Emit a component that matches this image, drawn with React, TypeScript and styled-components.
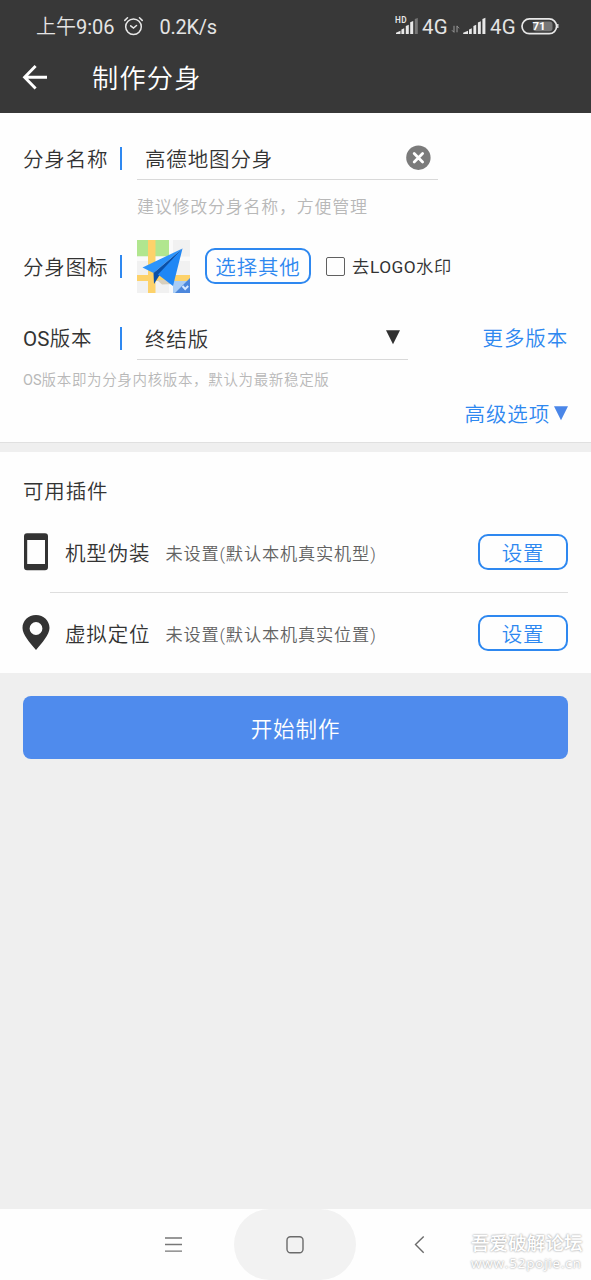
import React from "react";
import styled, { createGlobalStyle } from "styled-components";

const BLUE = "#2e88f0";
const INK = "#333333";

const GlobalStyle = createGlobalStyle`
  * { box-sizing: border-box; }
  body { margin: 0; background: #efefef; }
  button { font: inherit; letter-spacing: inherit; padding: 0; cursor: pointer; }
`;

const Screen = styled.div`
  width: 591px;
  height: 1280px;
  display: flex;
  flex-direction: column;
  overflow: hidden;
  background: #efefef;
  color: ${INK};
  font-family: Roboto, "Noto Sans CJK SC", sans-serif;
  font-weight: 350;
  white-space: nowrap;
`;

const Text = styled.span<{ $size?: number; $gap?: number; $color?: string; $drop?: number }>`
  font-size: ${(p) => p.$size ?? 20.5}px;
  letter-spacing: ${(p) => p.$gap ?? 0.85}px;
  color: ${(p) => p.$color ?? "inherit"};
  line-height: 1.3;
  padding-top: ${(p) => p.$drop ?? 4}px;
`;

const Latin = styled.span<{ $gap?: number }>`
  font-weight: 400;
  letter-spacing: ${(p) => p.$gap ?? 0}px;
`;

const Header = styled.header`
  height: 113px;
  background: #383838;
  color: #fff;
`;

const StatusBar = styled.div`
  height: 54px;
  padding: 0 32px 0 36px;
  display: flex;
  align-items: center;
  justify-content: space-between;
  color: #e4e4e4;
`;

const StatusGroup = styled.div<{ $gap: number }>`
  display: flex;
  align-items: center;
  gap: ${(p) => p.$gap}px;
  svg { display: block; flex: none; }
`;

const NetSpeed = styled(Text)`
  margin-left: 7px;
`;

const NetworkType = styled(Text)`
  width: 28px;
`;

const TitleBar = styled.div`
  height: 48px;
  padding-left: 22px;
  display: flex;
  align-items: center;
  gap: 44px;
`;

const Card = styled.section`
  background: #fefefe;
  padding: 0 23px;
`;

const FormCard = styled(Card)`
  height: 330px;
  border-bottom: 1px solid #e0e0e0;
`;

const PluginCard = styled(Card)`
  height: 221px;
  margin-top: 9px;
`;

const Row = styled.div<{ $height: number }>`
  height: ${(p) => p.$height}px;
  display: flex;
  align-items: center;
`;

const Label = styled(Text)`
  width: 97px;
`;

const Bar = styled.i`
  width: 2px;
  height: 23px;
  margin-right: 15px;
  background: ${BLUE};
`;

const Field = styled.div<{ $width: number; $pad: number }>`
  width: ${(p) => p.$width}px;
  height: 44px;
  padding: 0 ${(p) => p.$pad}px 0 8px;
  display: flex;
  align-items: center;
  justify-content: space-between;
  border-bottom: 1px solid #d9d9d9;
`;

const HintRow = styled(Row)`
  padding-left: 114px;
`;

const OutlineButton = styled.button<{ $width: number }>`
  width: ${(p) => p.$width}px;
  height: 36px;
  border: 2px solid ${BLUE};
  border-radius: 10px;
  background: transparent;
  color: ${BLUE};
  display: flex;
  align-items: center;
  justify-content: center;
`;

const PickButton = styled(OutlineButton)`
  margin: 0 15px 1px 15px;
`;

const Checkbox = styled.span`
  width: 19px;
  height: 19px;
  margin: 0 7px 1px 0;
  border: 1px solid #606060;
  border-radius: 2px;
`;

const MoreLink = styled(Text)`
  margin-left: auto;
`;

const AdvancedRow = styled(Row)`
  justify-content: flex-end;
  gap: 4px;
  svg { margin-bottom: 2px; }
`;

const CardTitle = styled(Row)`
  padding-top: 16px;
`;

const IconSlot = styled.div`
  width: 42px;
  display: flex;
`;

const PluginStatus = styled(Text)`
  margin-left: 15px;
  margin-right: auto;
`;

const Divider = styled.hr`
  height: 1px;
  margin: 0 0 0 27px;
  border: 0;
  background: #dedede;
`;

const StartButton = styled.button`
  height: 63px;
  margin: 23px 23px 0;
  border: 0;
  border-radius: 8px;
  background: #4f8bed;
  color: #fff;
  flex: none;
  display: flex;
  align-items: center;
  justify-content: center;
`;

const NavBar = styled.nav`
  height: 71px;
  margin-top: auto;
  padding-left: 165px;
  display: flex;
  align-items: center;
  background: #fefefe;
`;

const HomePill = styled.div`
  width: 122px;
  height: 71px;
  margin: 0 57px 0 51px;
  border-radius: 36px;
  background: #f2f2f2;
  display: flex;
  align-items: center;
  justify-content: center;
`;

const Watermark = styled.div`
  margin: 17px 0 0 45px;
  display: flex;
  flex-direction: column;
  color: #fff;
  font-weight: 500;
  text-shadow: 0 0 2px #aaa, 0 0 2px #bbb;
`;

const WatermarkLine = styled.span<{ $size: number; $gap: number }>`
  font-family: "Open Sans", "Noto Sans CJK SC", sans-serif;
  font-size: ${(p) => p.$size}px;
  letter-spacing: ${(p) => p.$gap}px;
  line-height: 20px;
`;

const AlarmIcon = () => (
  <svg width="20" height="20" viewBox="0 0 20 20" fill="none" stroke="#e8e8e8" strokeWidth="1.5" strokeLinecap="round">
    <circle cx="9.5" cy="9.8" r="7.8" />
    <path d="M.8 3.4 3.5 .8M18.2 3.4 15.5 .8M6.7 8.8 9.5 11.1 12.5 8.5" />
  </svg>
);

const HdSignal = () => (
  <svg width="24" height="26" viewBox="0 -3 24 26" fill="#e8e8e8">
    <text x="0" y="6.2" fontSize="8.2" fontWeight="600" fontFamily="Roboto" letterSpacing=".4">HD</text>
    <path d="M1 17V15.7L5.5 13.7V17zM6.4 17V12.5L9.2 11.3V17zM10.8 17V8.9L13.8 7.7V17zM15.2 17V5.3L18.2 4.1V17z" />
    <path d="M19.8 17V2.1L22.8 .9V17z" fill="#777" />
  </svg>
);

const DataArrows = () => (
  <svg width="8" height="8" viewBox="0 0 8 8" fill="none" stroke="#999" strokeWidth="1" overflow="visible">
    <path d="M1 2.8V9.3M-1 7.3 1 9.3M4 9.3V2.8M6 5.3 4 3.1" />
  </svg>
);

const Signal = () => (
  <svg width="23" height="18" viewBox="0 0 23 18" fill="#e8e8e8" overflow="visible">
    <path d="M-.8 16V14.7L4 12.7V16zM5 16V11.5L7.8 10.2V16zM9.4 16V8L12.2 6.8V16zM13.9 16V4.6L16.8 3.2V16zM18.4 16V1L21.4 -.2V16z" />
  </svg>
);

const Battery = () => (
  <svg width="38" height="17" viewBox="0 0 38 17">
    <rect x="1" y=".9" width="34.6" height="14.8" rx="7.4" fill="none" stroke="#e8e8e8" strokeWidth="1.7" />
    <path d="M36.8 6v4" stroke="#e8e8e8" strokeWidth="1.3" />
    <rect x="12" y="3.4" width="19.5" height="9.8" rx="3" fill="#777" />
    <text x="18" y="12.3" textAnchor="middle" fontSize="11.5" fontWeight="700" fontFamily="Roboto" fill="#fff">71</text>
  </svg>
);

const BackArrow = () => (
  <svg width="26" height="26" viewBox="0 0 26 26" fill="none" stroke="#fff" strokeWidth="2.9">
    <path d="M25 12.3H3M13.6 1.1 2.6 12.3 13.6 23.5" />
  </svg>
);

const ClearIcon = () => (
  <svg width="26" height="26" viewBox="0 0 26 26">
    <circle cx="13.4" cy="12.7" r="12.2" fill="#7b7b7b" />
    <path d="M9.2 8.5 17.6 16.9M17.6 8.5 9.2 16.9" stroke="#fff" strokeWidth="2.8" strokeLinecap="round" />
  </svg>
);

const Triangle = ({ color }: { color: string }) => (
  <svg width="14" height="15" viewBox="0 0 14 15">
    <path d="M0 .3H14L7 14.3z" fill={color} />
  </svg>
);

const MapIcon = () => (
  <svg width="53" height="53" viewBox="0 0 53 53">
    <rect width="53" height="53" fill="#f1f1f1" />
    <path d="M0 0H32V16.5H0z" fill="#b1e68f" />
    <path d="M32 0h4V53h-4zM0 16.5H53v4.5H0z" fill="#fafafa" />
    <path d="M11 0H18.5V53H11zM0 35H53V41H0z" fill="#fdd26a" />
    <path d="M36 41H53V53H36z" fill="#a9cdf6" />
    <path d="M53 38V53H38z" fill="#4c87dc" />
    <path d="M20 40 25 44.5 36 44 30 40z" fill="#d8cfbd" />
    <path d="M45.5 8.5 5.5 27.5 16.5 33z" fill="#2c94fb" />
    <path d="M45.5 8.5 16.5 33 17 44 22 36z" fill="#0a50a8" />
    <path d="M45.5 8.5 21 34.5 36 46z" fill="#1f87f5" />
    <path d="M45.5 46 48.2 49 51.2 46" fill="none" stroke="#d7e8ff" strokeWidth="2" />
  </svg>
);

const PhoneIcon = () => (
  <svg width="26" height="38" viewBox="0 0 26 38">
    <path d="M4 .2H22Q25 .2 25 3.2V34.2Q25 37.2 22 37.2H4Q1 37.2 1 34.2V3.2Q1 .2 4 .2zM4.2 7V31H22V7z" fill={INK} fillRule="evenodd" />
  </svg>
);

const PinIcon = () => (
  <svg width="28" height="37" viewBox="0 0 28 37" overflow="visible">
    <path d="M13 0C5.2 0 -.5 5.7 -.5 13C-.5 19.5 7 28 13 35C19 28 26.5 19.5 26.5 13C26.5 5.7 20.7 0 13 0zM13 7.1A6.4 6.4 0 1 1 13 19.9A6.4 6.4 0 1 1 13 7.1z" fill={INK} fillRule="evenodd" />
  </svg>
);

const MenuIcon = () => (
  <svg width="18" height="18" viewBox="0 0 18 18" stroke="#777" strokeWidth="1.3">
    <path d="M0 2H17M0 8.5H17M0 15.1H17" />
  </svg>
);

const HomeIcon = () => (
  <svg width="18" height="18" viewBox="0 0 18 18">
    <rect x="1" y=".7" width="16" height="16" rx="3.5" fill="none" stroke="#6b6b6b" strokeWidth="1.4" />
  </svg>
);

const ChevronIcon = () => (
  <svg width="13" height="18" viewBox="0 0 13 18" fill="none" stroke="#6b6b6b" strokeWidth="1.4">
    <path d="M10.7 .5 2.5 8.6 10.7 16.8" />
  </svg>
);

type PluginProps = { icon: React.ReactNode; name: string; status: string };

const Plugin = ({ icon, name, status }: PluginProps) => (
  <Row $height={80}>
    <IconSlot>{icon}</IconSlot>
    <Text>{name}</Text>
    <PluginStatus $size={17.2} $gap={0.85} $drop={5} $color="#626262">{status}</PluginStatus>
    <OutlineButton $width={90}><Text>设置</Text></OutlineButton>
  </Row>
);

export default function App() {
  return (
    <Screen>
      <GlobalStyle />
      <Header>
        <StatusBar>
          <StatusGroup $gap={9}>
            <Text $size={20} $gap={0} $drop={0}>上午<Latin>9:06</Latin></Text>
            <AlarmIcon />
            <NetSpeed $size={20} $drop={0}><Latin $gap={-0.3}>0.2K/s</Latin></NetSpeed>
          </StatusGroup>
          <StatusGroup $gap={3}>
            <HdSignal />
            <NetworkType $size={20.4} $drop={0}><Latin $gap={0.3}>4G</Latin></NetworkType>
            <DataArrows />
            <Signal />
            <NetworkType $size={20.4} $drop={0}><Latin $gap={0.3}>4G</Latin></NetworkType>
            <Battery />
          </StatusGroup>
        </StatusBar>
        <TitleBar>
          <BackArrow />
          <Text $size={26.2} $gap={1.2} $drop={3}>制作分身</Text>
        </TitleBar>
      </Header>

      <FormCard>
        <Row $height={90}>
          <Label>分身名称</Label>
          <Bar />
          <Field $width={301} $pad={7}>
            <Text $drop={6}>高德地图分身</Text>
            <ClearIcon />
          </Field>
        </Row>
        <HintRow $height={7}>
          <Text $size={17} $gap={0.75} $drop={2} $color="#b8b8b8">建议修改分身名称，方便管理</Text>
        </HintRow>
        <Row $height={113}>
          <Label>分身图标</Label>
          <Bar />
          <MapIcon />
          <PickButton $width={106}><Text>选择其他</Text></PickButton>
          <Checkbox />
          <Text $size={17.3} $gap={0.8} $drop={2}>去<Latin $gap={0.4}>LOGO</Latin>水印</Text>
        </Row>
        <Row $height={30}>
          <Label $drop={3}><Latin $gap={0.2}>OS</Latin>版本</Label>
          <Bar />
          <Field $width={271} $pad={8}>
            <Text $drop={5}>终结版</Text>
            <Triangle color="#303030" />
          </Field>
          <MoreLink $color={BLUE} $drop={3}>更多版本</MoreLink>
        </Row>
        <Row $height={54}>
          <Text $size={14.5} $gap={0.65} $drop={2} $color="#b8b8b8"><Latin>OS</Latin>版本即为分身内核版本，默认为最新稳定版</Text>
        </Row>
        <AdvancedRow $height={14}>
          <Text $color={BLUE} $drop={3}>高级选项</Text>
          <Triangle color="#4a86e8" />
        </AdvancedRow>
      </FormCard>

      <PluginCard>
        <CardTitle $height={60}>
          <Text>可用插件</Text>
        </CardTitle>
        <Plugin icon={<PhoneIcon />} name="机型伪装" status="未设置(默认本机真实机型)" />
        <Divider />
        <Plugin icon={<PinIcon />} name="虚拟定位" status="未设置(默认本机真实位置)" />
      </PluginCard>

      <StartButton><Text $size={21.5} $gap={0.9}>开始制作</Text></StartButton>

      <NavBar>
        <MenuIcon />
        <HomePill><HomeIcon /></HomePill>
        <ChevronIcon />
        <Watermark>
          <WatermarkLine $size={18.6} $gap={0}>吾爱破解论坛</WatermarkLine>
          <WatermarkLine $size={13.5} $gap={0.8}>www.52pojie.cn</WatermarkLine>
        </Watermark>
      </NavBar>
    </Screen>
  );
}
